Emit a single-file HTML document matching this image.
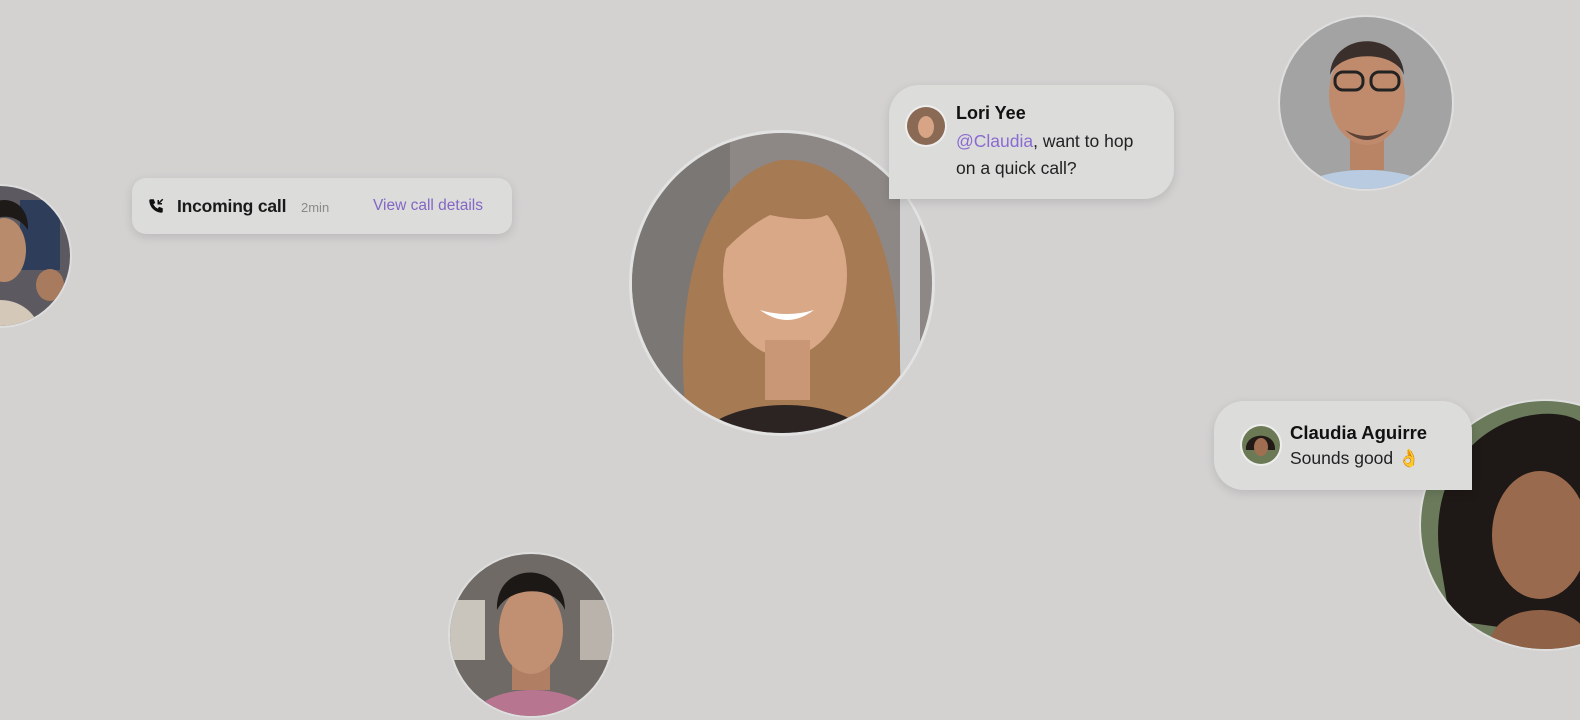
<!DOCTYPE html>
<html><head><style>
html,body{margin:0;padding:0}
body{width:1580px;height:720px;background:#d3d2d1;position:relative;overflow:hidden;font-family:"Liberation Sans",sans-serif}
.card{position:absolute;background:#dcdcdb;box-shadow:0 3px 10px rgba(0,0,0,.12)}
svg{position:absolute;left:0;top:0}
</style></head><body>
<svg width="1580" height="720" viewBox="0 0 1580 720">
<defs>
<clipPath id="c1"><circle cx="782" cy="283" r="150"/></clipPath>
<clipPath id="c2"><circle cx="1366" cy="103" r="86"/></clipPath>
<clipPath id="c3"><circle cx="0" cy="256" r="70"/></clipPath>
<clipPath id="c4"><circle cx="531" cy="635" r="81"/></clipPath>
<clipPath id="c5"><circle cx="1545" cy="525" r="124"/></clipPath>
</defs>
<circle cx="782" cy="283" r="153" fill="#e2e2e2"/>
<g clip-path="url(#c1)">
<rect x="620" y="120" width="330" height="330" fill="#8d8886"/>
<rect x="620" y="120" width="110" height="330" fill="#7b7775"/>
<rect x="900" y="160" width="20" height="280" fill="#d0cfcf"/>
<path d="M690 440 C670 330 690 180 780 160 C870 155 905 260 900 420 L690 440Z" fill="#a67a53"/>
<ellipse cx="785" cy="275" rx="62" ry="82" fill="#d9a887"/>
<path d="M725 250 C730 190 770 175 820 185 C850 200 840 230 770 215 C750 225 735 240 725 250Z" fill="#a67a53"/>
<path d="M760 310 Q787 330 814 310 Q787 318 760 310Z" fill="#fff"/>
<rect x="765" y="340" width="45" height="60" fill="#c99676"/>
<path d="M690 450 C710 390 860 390 880 450Z" fill="#2b2422"/>
</g>
<circle cx="1366" cy="103" r="88" fill="#dedede"/>
<g clip-path="url(#c2)">
<rect x="1270" y="10" width="200" height="200" fill="#a3a3a3"/>
<path d="M1290 200 C1300 160 1430 160 1445 200Z" fill="#b9cbe0"/>
<rect x="1350" y="130" width="34" height="40" fill="#b98466"/>
<ellipse cx="1367" cy="95" rx="38" ry="50" fill="#c08b6d"/>
<path d="M1330 75 C1332 30 1402 30 1404 75 C1395 50 1340 50 1330 75Z" fill="#3a2f2a"/>
<rect x="1335" y="72" width="28" height="18" rx="8" fill="none" stroke="#222" stroke-width="3"/>
<rect x="1371" y="72" width="28" height="18" rx="8" fill="none" stroke="#222" stroke-width="3"/>
<path d="M1345 130 Q1367 150 1389 130 Q1367 142 1345 130Z" fill="#5a4238"/>
</g>
<circle cx="0" cy="256" r="72" fill="#dedede"/>
<g clip-path="url(#c3)">
<rect x="-80" y="180" width="160" height="160" fill="#5c5a60"/>
<rect x="20" y="200" width="40" height="70" fill="#2e3d5a"/>
<ellipse cx="4" cy="250" rx="22" ry="32" fill="#b88b6c"/>
<path d="M-25 230 C-20 190 30 190 28 230 C15 210 -10 215 -25 230Z" fill="#1e1a18"/>
<path d="M-40 330 C-30 290 30 290 40 330Z" fill="#d4c8b8"/>
<ellipse cx="50" cy="285" rx="14" ry="16" fill="#a87b5e"/>
</g>
<circle cx="531" cy="635" r="83" fill="#dedede"/>
<g clip-path="url(#c4)">
<rect x="445" y="550" width="175" height="175" fill="#6f6a66"/>
<rect x="445" y="600" width="40" height="60" fill="#c9c4bc"/>
<rect x="580" y="600" width="40" height="60" fill="#b9b3ab"/>
<rect x="512" y="650" width="38" height="40" fill="#b07e62"/>
<ellipse cx="531" cy="630" rx="32" ry="44" fill="#c18f71"/>
<path d="M497 610 C495 560 565 560 565 610 C555 585 510 585 497 610Z" fill="#1c1816"/>
<path d="M470 720 C480 680 585 680 595 720Z" fill="#b87590"/>
</g>
<circle cx="1545" cy="525" r="126" fill="#dedede"/>
<g clip-path="url(#c5)">
<rect x="1415" y="395" width="170" height="260" fill="#6a7a5a"/>
<path d="M1440 560 C1420 420 1560 390 1590 430 L1590 640 L1450 620Z" fill="#1e1816"/>
<ellipse cx="1540" cy="535" rx="48" ry="64" fill="#9a6a4e"/>
<path d="M1490 640 C1500 600 1580 600 1590 640 L1590 660 L1490 660Z" fill="#8f6147"/>
</g>
</svg>

<div class="card" style="left:132px;top:178px;width:380px;height:56px;border-radius:14px">
  <svg width="18" height="18" viewBox="0 0 24 24" style="left:15px;top:19px"><path d="M5 3h4l2 5-2.5 1.5a11 11 0 0 0 6 6L16 13l5 2v4a2 2 0 0 1-2 2A17 17 0 0 1 3 5a2 2 0 0 1 2-2z" fill="#111"/><path d="M15 4v5h5M15 9l6-6" stroke="#111" stroke-width="2" fill="none"/></svg>
  <span style="position:absolute;left:45px;top:18px;font-size:17.5px;font-weight:bold;color:#1a1a1a;letter-spacing:-0.2px">Incoming call</span>
  <span style="position:absolute;left:169px;top:22px;font-size:13px;color:#8a8a8a">2min</span>
  <span style="position:absolute;left:241px;top:19px;font-size:15.5px;color:#8466c4">View call details</span>
</div>

<div class="card" style="left:889px;top:85px;width:285px;height:114px;border-radius:30px 30px 30px 0">
  <svg width="42" height="42" viewBox="0 0 42 42" style="left:16px;top:20px"><circle cx="21" cy="21" r="21" fill="#eee"/><circle cx="21" cy="21" r="19" fill="#8a6a55"/><ellipse cx="21" cy="22" rx="8" ry="11" fill="#d7a585"/></svg>
  <span style="position:absolute;left:67px;top:18px;font-size:18px;font-weight:bold;color:#111">Lori Yee</span>
  <div style="position:absolute;left:67px;top:43px;font-size:17.5px;line-height:27px;color:#222;width:195px"><span style="color:#8a6bd0">@Claudia</span>, want to hop on a quick call?</div>
</div>

<div class="card" style="left:1214px;top:401px;width:258px;height:89px;border-radius:30px 30px 0 30px">
  <svg width="42" height="42" viewBox="0 0 42 42" style="left:26px;top:23px"><circle cx="21" cy="21" r="21" fill="#eee"/><circle cx="21" cy="21" r="19" fill="#6b7a55"/><path d="M6 26 C4 8 36 6 35 26Z" fill="#221a16"/><ellipse cx="21" cy="23" rx="7" ry="9" fill="#a06f52"/></svg>
  <span style="position:absolute;left:76px;top:21px;font-size:18.5px;font-weight:bold;color:#111">Claudia Aguirre</span>
  <span style="position:absolute;left:76px;top:47px;font-size:17.5px;color:#222">Sounds good <span style="color:#e8b030">👌</span></span>
</div>
</body></html>
